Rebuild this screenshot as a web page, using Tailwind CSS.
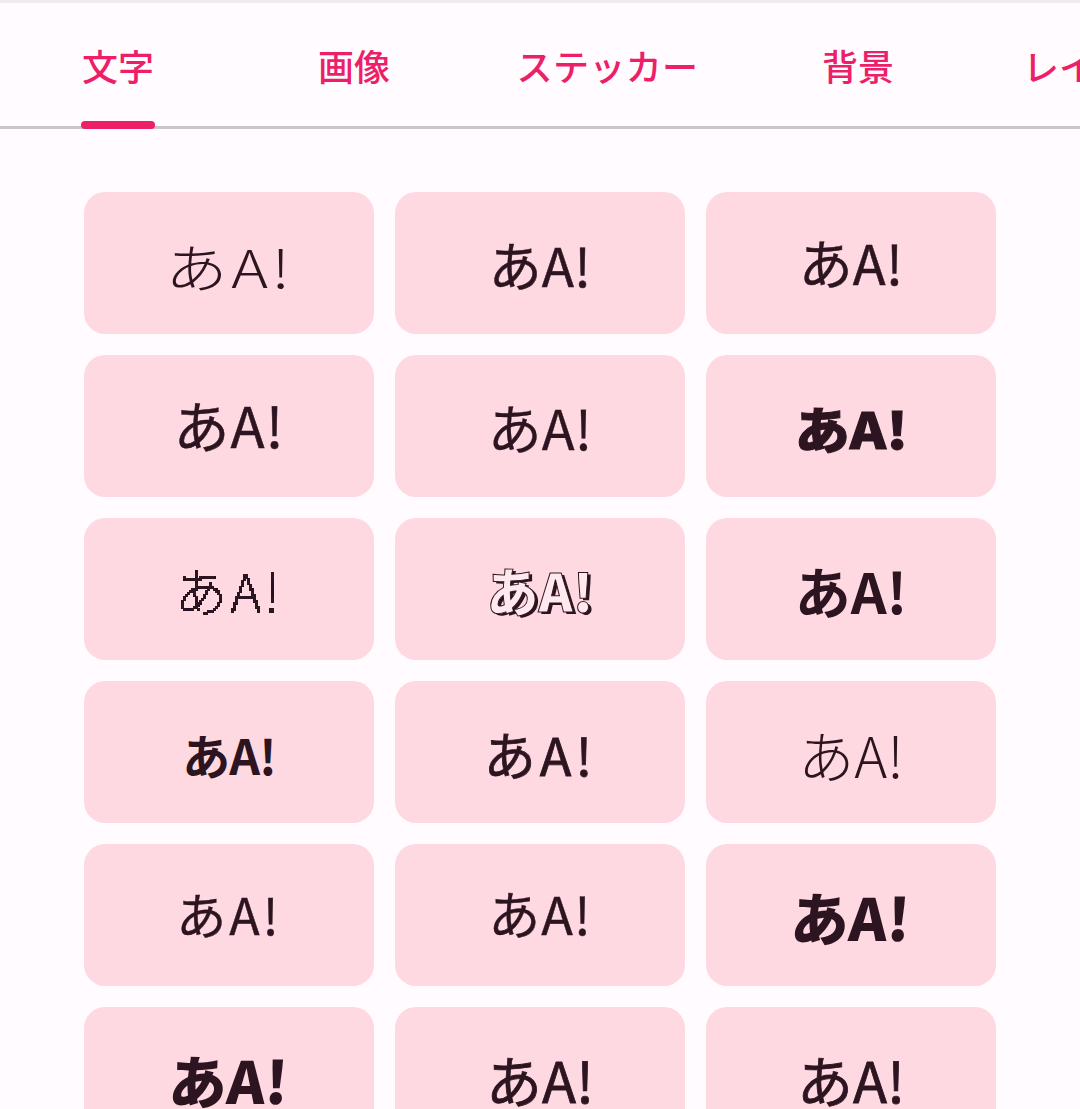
<!DOCTYPE html>
<html lang="ja">
<head>
<meta charset="utf-8">
<title>文字</title>
<script src="https://cdn.jsdelivr.net/npm/@tailwindcss/browser@4"></script>
</head>
<body class="h-[1109px] overflow-hidden bg-[#fffbff] text-[#2c1520] [font-family:'Noto_Sans_CJK_JP',sans-serif]">

<!-- Pixel look for the bitmap style font sample -->
<svg class="absolute h-0 w-0" aria-hidden="true">
  <filter id="pixelate" x="0" y="0" width="100%" height="100%">
    <feFlood x="1" y="1" width="1" height="1"/>
    <feComposite width="2" height="2"/>
    <feTile result="dots"/>
    <feComposite in="SourceGraphic" in2="dots" operator="in"/>
    <feMorphology operator="dilate" radius="1"/>
    <feComponentTransfer>
      <feFuncA type="discrete" tableValues="0 1 1 1"/>
    </feComponentTransfer>
  </filter>
</svg>

<!-- Status strip -->
<div class="h-[3px] bg-[#efecef]"></div>

<!-- Tabs -->
<nav class="relative flex h-[126px] overflow-hidden text-[36px] font-medium leading-none text-[#ec1f68]">
  <div class="absolute inset-x-0 bottom-0 h-[3px] bg-[#cbc4cc]"></div>
  <div class="relative ml-[19px] mr-[38px] flex w-[198px] shrink-0 justify-center pt-[44px]">
    文字
    <span class="absolute bottom-0 left-[62px] h-[8px] w-[74px] rounded-full bg-[#ec1f68]"></span>
  </div>
  <div class="flex w-[198px] shrink-0 justify-center pt-[44px]">画像</div>
  <div class="flex w-[306px] shrink-0 justify-center pl-[3px] pt-[44px] tracking-[0.4px]">ステッカー</div>
  <div class="flex w-[198px] shrink-0 justify-center pt-[44px]">背景</div>
  <div class="flex shrink-0 whitespace-nowrap pl-[66px] pt-[44px]">レイヤー</div>
</nav>

<!-- Font grid -->
<div class="ml-[84px] mt-[63px] grid w-[912px] grid-cols-3 gap-[21px]">
  <button class="flex h-[142px] items-center justify-center rounded-[21px] bg-[#ffd9e1]"><span class="inline-block translate-y-[3px] scale-x-120 text-[52px] font-light leading-none tracking-[3px]">あA!</span></button>
  <button class="flex h-[142px] items-center justify-center rounded-[21px] bg-[#ffd9e1]"><span class="inline-block translate-y-[1px] text-[53px] font-normal leading-none [-webkit-text-stroke:0.5px_#2c1520]">あA!</span></button>
  <button class="flex h-[142px] items-center justify-center rounded-[21px] bg-[#ffd9e1]"><span class="inline-block -translate-y-[1px] text-[54px] font-normal leading-none [-webkit-text-stroke:0.5px_#2c1520]">あA!</span></button>

  <button class="flex h-[142px] items-center justify-center rounded-[21px] bg-[#ffd9e1]"><span class="inline-block -translate-y-[2px] text-[56px] font-normal leading-none tracking-[1px] [-webkit-text-stroke:0.5px_#2c1520]">あA!</span></button>
  <button class="flex h-[142px] items-center justify-center rounded-[21px] bg-[#ffd9e1]"><span class="inline-block translate-y-[1px] text-[54px] font-normal leading-none [-webkit-text-stroke:0.3px_#2c1520]">あA!</span></button>
  <button class="flex h-[142px] items-center justify-center rounded-[21px] bg-[#ffd9e1]"><span class="inline-block translate-y-[1px] scale-x-110 text-[50px] font-black leading-none [-webkit-text-stroke:1px_#2c1520]">あA!</span></button>

  <button class="flex h-[142px] items-center justify-center rounded-[21px] bg-[#ffd9e1]"><span class="inline-block translate-y-[1px] text-[52px] font-thin leading-none tracking-[4px] [filter:url(#pixelate)]">あA!</span></button>
  <button class="flex h-[142px] items-center justify-center rounded-[21px] bg-[#ffd9e1]"><span class="inline-block translate-y-[1px] text-[52px] font-black leading-none text-[#ffe9ee] [-webkit-text-stroke:1px_#2c1520] [text-shadow:3px_2px_0_#2c1520]">あA!</span></button>
  <button class="flex h-[142px] items-center justify-center rounded-[21px] bg-[#ffd9e1]"><span class="inline-block translate-y-[1px] text-[56px] font-bold leading-none">あA!</span></button>

  <button class="flex h-[142px] items-center justify-center rounded-[21px] bg-[#ffd9e1]"><span class="inline-block translate-y-[2px] text-[48px] font-bold leading-none tracking-[-1px]">あA!</span></button>
  <button class="flex h-[142px] items-center justify-center rounded-[21px] bg-[#ffd9e1]"><span class="inline-block translate-y-[2px] text-[52px] font-normal leading-none tracking-[4px] [-webkit-text-stroke:0.8px_#2c1520]">あA!</span></button>
  <button class="flex h-[142px] items-center justify-center rounded-[21px] bg-[#ffd9e1]"><span class="inline-block translate-y-[2px] text-[56px] font-light leading-none">あA!</span></button>

  <button class="flex h-[142px] items-center justify-center rounded-[21px] bg-[#ffd9e1]"><span class="inline-block -translate-y-[2px] text-[50px] font-normal leading-none tracking-[3px] [-webkit-text-stroke:0.4px_#2c1520]">あA!</span></button>
  <button class="flex h-[142px] items-center justify-center rounded-[21px] bg-[#ffd9e1]"><span class="inline-block -translate-y-[2px] text-[52px] font-normal leading-none tracking-[1px] [-webkit-text-stroke:0.4px_#2c1520]">あA!</span></button>
  <button class="flex h-[142px] items-center justify-center rounded-[21px] bg-[#ffd9e1]"><span class="inline-block translate-y-[1px] -skew-x-3 text-[58px] font-black leading-none">あA!</span></button>

  <button class="flex h-[142px] items-center justify-center rounded-[21px] bg-[#ffd9e1]"><span class="inline-block translate-y-[1px] -skew-x-3 text-[58px] font-black leading-none">あA!</span></button>
  <button class="flex h-[142px] items-center justify-center rounded-[21px] bg-[#ffd9e1]"><span class="inline-block translate-y-[1px] text-[56px] font-normal leading-none [-webkit-text-stroke:0.8px_#2c1520]">あA!</span></button>
  <button class="flex h-[142px] items-center justify-center rounded-[21px] bg-[#ffd9e1]"><span class="inline-block translate-y-[1px] text-[56px] font-normal leading-none [-webkit-text-stroke:0.8px_#2c1520]">あA!</span></button>
</div>

</body>
</html>
